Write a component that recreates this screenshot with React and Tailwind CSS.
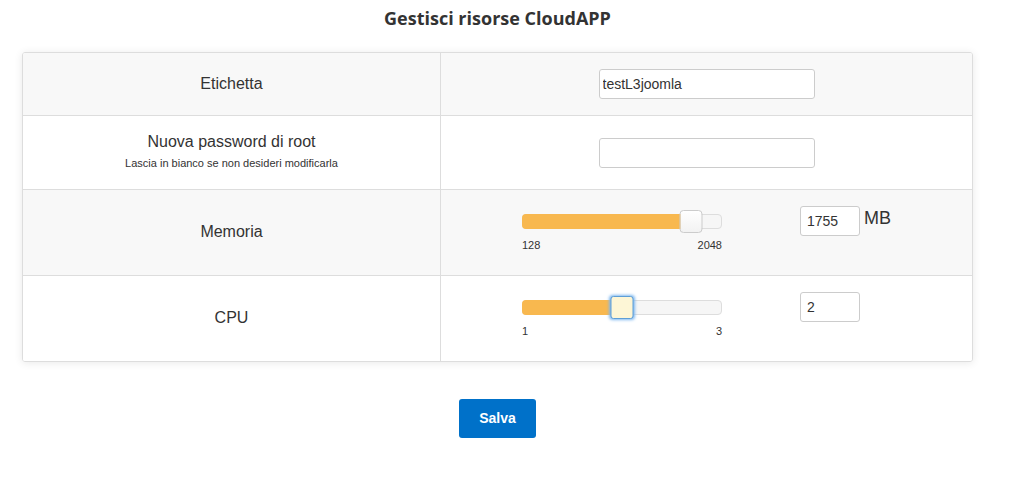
import React from 'react';

const Slider = ({ min, max, value, focused }) => {
  const pct = ((value - min) / (max - min)) * 100;
  return (
    <div className="w-[200px]">
      <div className="relative h-[15px] rounded-[4px] border border-[#dddddd] bg-[#f6f6f6]">
        <div
          className="absolute left-[-1px] top-[-1px] bottom-[-1px] rounded-l-[4px] bg-[#f8b84f]"
          style={{ width: `calc(${pct}% + 1px)` }}
        />
        {focused ? (
          <div
            className="absolute top-[-5px] h-[23px] w-[23px] -translate-x-1/2 rounded-[3px] border border-[#5e9ed6] bg-[#fdf6d6] shadow-[0_0_3px_1px_#7fb8f0]"
            style={{ left: `${pct}%` }}
          />
        ) : (
          <div
            className="absolute top-[-5px] h-[23px] w-[23px] -translate-x-1/2 rounded-[4px] border border-[#cccccc] bg-gradient-to-b from-white to-[#f2f2f2]"
            style={{ left: `${pct}%` }}
          />
        )}
      </div>
      <div className="mt-[10px] flex justify-between text-[11px] leading-[13px] text-[#333]">
        <span>{min}</span>
        <span>{max}</span>
      </div>
    </div>
  );
};

export default function App() {
  return (
    <div className="min-h-[486px] bg-white font-['Liberation_Sans',Arial,sans-serif] text-[#333]">
      <div className="ml-[22px] w-[951px]">
        <h1 className="pt-[5px] text-center font-['Open_Sans',sans-serif] text-[18px] font-bold leading-[26px] text-[#333]">
          Gestisci risorse CloudAPP
        </h1>

        {/* Tabella risorse */}
        <div className="mt-[21px] overflow-hidden rounded-[3px] border border-[#dddddd] shadow-[0_1px_8px_rgba(0,0,0,0.09)]">
          <div className="grid h-[63px] grid-cols-[418px_1fr] border-b border-[#dddddd] bg-[#f8f8f8]">
            <div className="flex items-center justify-center border-r border-[#dddddd] text-[16px]">Etichetta</div>
            <div className="flex items-center justify-center">
              <input
                defaultValue="testL3joomla"
                className="h-[30px] w-[216px] rounded-[3px] border border-[#cccccc] bg-white px-[3px] text-[14px] text-[#333] outline-none"
              />
            </div>
          </div>

          <div className="grid h-[74px] grid-cols-[418px_1fr] border-b border-[#dddddd] bg-white">
            <div className="flex flex-col items-center justify-center border-r border-[#dddddd] pb-[4px]">
              <span className="text-[16px] leading-[20px]">Nuova password di root</span>
              <span className="mt-[5px] text-[11px] leading-[13px]">Lascia in bianco se non desideri modificarla</span>
            </div>
            <div className="flex items-center justify-center">
              <input
                type="password"
                className="h-[30px] w-[216px] rounded-[3px] border border-[#cccccc] bg-white px-[3px] text-[14px] outline-none"
              />
            </div>
          </div>

          <div className="grid h-[86px] grid-cols-[418px_1fr] border-b border-[#dddddd] bg-[#f8f8f8]">
            <div className="flex items-center justify-center border-r border-[#dddddd] pb-[2px] text-[16px]">Memoria</div>
            <div className="flex items-start pl-[81px] pt-[24px]">
              <Slider min={128} max={2048} value={1755} />
              <div className="ml-[78px] mt-[-8px] flex items-start">
                <input
                  defaultValue="1755"
                  className="h-[30px] w-[60px] rounded-[3px] border border-[#cccccc] bg-white px-[6px] text-[14px] text-[#333] outline-none"
                />
                <span className="ml-[4px] text-[18px] leading-[24px]">MB</span>
              </div>
            </div>
          </div>

          <div className="grid h-[85px] grid-cols-[418px_1fr] bg-white">
            <div className="flex items-center justify-center border-r border-[#dddddd] pb-[2px] text-[16px]">CPU</div>
            <div className="flex items-start pl-[81px] pt-[24px]">
              <Slider min={1} max={3} value={2} focused />
              <div className="ml-[78px] mt-[-8px] flex items-start">
                <input
                  defaultValue="2"
                  className="h-[30px] w-[60px] rounded-[3px] border border-[#cccccc] bg-white px-[6px] text-[14px] text-[#333] outline-none"
                />
              </div>
            </div>
          </div>
        </div>

        <div className="mt-[37px] flex justify-center">
          <button className="h-[39px] w-[77px] rounded-[3px] bg-[#0071c9] text-[14px] font-bold text-white">
            Salva
          </button>
        </div>
      </div>
    </div>
  );
}
